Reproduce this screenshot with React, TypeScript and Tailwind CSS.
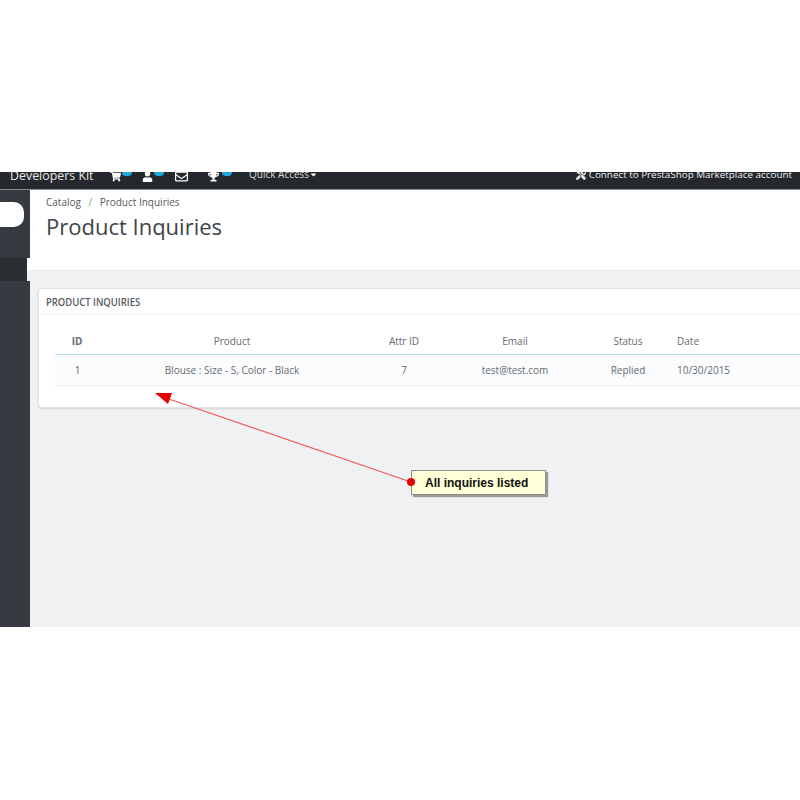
import { FaShoppingCart, FaUser, FaRegEnvelope, FaTrophy, FaCaretDown, FaTools } from 'react-icons/fa';

const font = { fontFamily: '"Open Sans", "Liberation Sans", sans-serif' };

function Badge() {
  return <span className="absolute left-[12px] top-[-3px] w-[10px] h-[8px] rounded-full bg-[#1fa9dc]" />;
}

export default function App() {
  return (
    <div className="relative w-[800px] h-[800px] bg-white overflow-hidden" style={font}>
      <div className="h-[172px]" />

      {/* top bar, cut off by the screenshot */}
      <div className="h-[18px] bg-[#25282c] border-b border-[#8d9093] flex items-center overflow-hidden text-white">
        <span className="ml-[10px] w-[100px] shrink-0 text-[12.4px] leading-[17px] mt-[-10px] text-[#e6e7e8]">Developers Kit</span>
        <span className="relative w-[32px] shrink-0 mt-[-8px]">
          <FaShoppingCart size={11} />
          <Badge />
        </span>
        <span className="relative w-[33px] shrink-0 mt-[-8px]">
          <FaUser size={11} />
          <Badge />
        </span>
        <span className="w-[33px] shrink-0 mt-[-8px]">
          <FaRegEnvelope size={13} />
        </span>
        <span className="relative w-[41px] shrink-0 mt-[-8px]">
          <FaTrophy size={11} />
          <span className="absolute left-[14px] top-[-3px] w-[10px] h-[8px] rounded-full bg-[#1fa9dc]" />
        </span>
        <span className="text-[10px] leading-none mt-[-13px] text-[#d5d6d8]">Quick Access</span>
        <FaCaretDown size={9} className="mt-[-13px]" />
        <span className="ml-auto mr-[8px] flex items-center gap-[3px] mt-[-12px] text-[9.85px] leading-none text-[#eeeeef]">
          <FaTools size={10} />
          Connect to PrestaShop Marketplace account
        </span>
      </div>

      <div className="flex h-[437px]">
        {/* sidebar */}
        <div className="w-[30px] shrink-0 bg-[#363a41] pt-[12px] flex flex-col">
          <div className="w-[24px] h-[25px] bg-white rounded-r-[10px]" />
          <div className="mt-[31px] h-[23px] flex">
            <div className="w-[27px] bg-[#2a2d31]" />
            <div className="w-[3px] flex flex-col">
              <div className="h-[13px] bg-white" />
              <div className="flex-1 bg-[#eff1f2]" />
            </div>
          </div>
        </div>

        {/* content */}
        <div className="flex-1 min-w-0 bg-[#eff1f2] flex flex-col">
          <div className="h-[81px] shrink-0 bg-white border-b border-[#e4e6e8] pl-[16px] pt-[6px] text-[#555a60]">
            <div className="text-[10px] leading-[13px] flex gap-[7.5px]">
              <span>Catalog</span>
              <span className="text-[#8a9a8a]">/</span>
              <span>Product Inquiries</span>
            </div>
            <h1 className="mt-[2px] text-[22px] leading-[30px] font-normal text-[#3f4449]">Product Inquiries</h1>
          </div>

          {/* panel */}
          <div className="ml-[8px] mt-[17px] h-[120px] bg-white rounded-l-[4px] border border-r-0 border-[#e2e4e6] shadow-[0_1px_2px_rgba(0,0,0,0.12)]">
            <div className="ml-[3px] h-[26px] border-b border-[#eef0f1] pl-[4px] flex items-center">
              <span className="text-[11px] leading-none font-semibold text-[#555a60] origin-left scale-x-[0.86] whitespace-nowrap">PRODUCT INQUIRIES</span>
            </div>
            <table className="ml-[16px] mt-[13px] w-[745px] table-fixed border-separate border-spacing-0 text-[10px] text-[#666b70]">
              <colgroup>
                <col className="w-[45px]" />
                <col className="w-[264px]" />
                <col className="w-[80px]" />
                <col className="w-[142px]" />
                <col className="w-[84px]" />
                <col />
              </colgroup>
              <thead>
                <tr className="h-[27px]">
                  <th className="border-b border-[#b5e0f5] font-bold text-center pr-[1px]">ID</th>
                  <th className="border-b border-[#b5e0f5] font-normal text-center">Product</th>
                  <th className="border-b border-[#b5e0f5] font-normal text-center">Attr ID</th>
                  <th className="border-b border-[#b5e0f5] font-normal text-center">Email</th>
                  <th className="border-b border-[#b5e0f5] font-normal text-center">Status</th>
                  <th className="border-b border-[#b5e0f5] font-normal text-left pl-[7px]">Date</th>
                </tr>
              </thead>
              <tbody>
                <tr className="h-[31px] bg-[#fbfcfe]">
                  <td className="border-b border-[#eef0f2] text-center">1</td>
                  <td className="border-b border-[#eef0f2] text-center">Blouse : Size - S, Color - Black</td>
                  <td className="border-b border-[#eef0f2] text-center">7</td>
                  <td className="border-b border-[#eef0f2] text-center">test@test.com</td>
                  <td className="border-b border-[#eef0f2] text-center">Replied</td>
                  <td className="border-b border-[#eef0f2] text-left pl-[7px]">10/30/2015</td>
                </tr>
              </tbody>
            </table>
          </div>
        </div>
      </div>

      {/* annotation over the screenshot */}
      <svg className="absolute left-0 top-0 pointer-events-none" width="800" height="800">
        <line x1="166" y1="398" x2="411" y2="482" stroke="#f25a5a" strokeWidth="1.3" />
        <polygon points="155,393 172,393 168,404" fill="#e60000" />
      </svg>
      <div className="absolute left-[411px] top-[470px] w-[135px] h-[25px] bg-[#ffffd8] border border-[#8f8f8f] shadow-[2px_2px_1px_#9a9a9a] flex items-center pl-[13px] text-[12px] font-bold text-[#111]" style={{ fontFamily: '"Liberation Sans", sans-serif' }}>
        All inquiries listed
      </div>
      <span className="absolute left-[407px] top-[478px] w-[8px] h-[8px] rounded-full bg-[#e60000]" />
    </div>
  );
}
